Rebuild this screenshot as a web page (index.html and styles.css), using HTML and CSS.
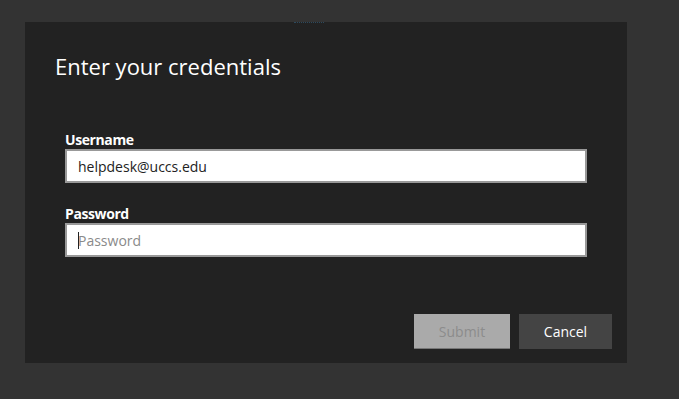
FILE: index.html
```html
<!DOCTYPE html>
<html lang="en">
<head>
  <meta charset="UTF-8">
  <title>Enter your credentials</title>
  <link rel="stylesheet" href="styles.css">
</head>
<body>
  <div class="dialog">
    <div class="dots"></div>
    <h2>Enter your credentials</h2>
    <form class="cred-form">
      <!-- Username -->
      <div class="form-group">
        <label for="username">Username</label>
        <input type="text" id="username" value="helpdesk@uccs.edu">
      </div>

      <!-- Password -->
      <div class="form-group">
        <label for="password">Password</label>
        <div class="field">
          <span class="caret"></span>
          <input type="password" id="password" placeholder="Password">
        </div>
      </div>
    </form>

    <!-- Buttons -->
    <div class="actions">
      <button type="button" class="btn btn-submit" disabled>Submit</button>
      <button type="button" class="btn btn-cancel">Cancel</button>
    </div>
  </div>
</body>
</html>
```

FILE: styles.css
```css
body {
  margin: 0;
  background: #333333;
  font-family: 'Open Sans', 'Noto Sans', sans-serif;
  color: #fff;
  height: 399px;
  overflow: hidden;
}

/* Dialog */
.dialog {
  position: relative;
  box-sizing: border-box;
  margin: 22px 0 0 25px;
  width: 602px;
  height: 341px;
  background: #222222;
  padding: 28px 40px 14px 30px;
  display: flex;
  flex-direction: column;
}

.dots {
  position: absolute;
  top: 0;
  left: 269px;
  width: 30px;
  height: 1px;
  border-top: 1px dotted #2d4a5e;
}

.dialog h2 {
  margin: 0;
  font-size: 22px;
  font-weight: 400;
  line-height: 32px;
  color: #fff;
}

.cred-form {
  margin-top: 49px;
  padding-left: 10px;
}

.form-group {
  margin-bottom: 22px;
}

.form-group label {
  display: block;
  font-size: 14px;
  font-weight: 700;
  letter-spacing: -0.4px;
  line-height: 18px;
  color: #fff;
}

.field {
  position: relative;
}

.form-group input {
  display: block;
  box-sizing: border-box;
  width: 522px;
  height: 34px;
  margin: 0;
  padding: 0 11px;
  border: 2px solid #999;
  background: #fff;
  font-family: 'Open Sans', 'Noto Sans', sans-serif;
  font-size: 14px;
  color: #222;
  outline: none;
}

.form-group input::placeholder {
  color: #8a8a8a;
}

.caret {
  position: absolute;
  left: 13px;
  top: 9px;
  width: 1px;
  height: 17px;
  background: #222;
}

/* Buttons */
.actions {
  margin-top: auto;
  display: flex;
  justify-content: flex-end;
  gap: 9px;
  margin-right: -25px;
}

.btn {
  height: 35px;
  border: none;
  font-family: 'Open Sans', 'Noto Sans', sans-serif;
  font-size: 14px;
  padding: 0;
}

.btn-submit {
  width: 96px;
  background: #aaaaaa;
  color: #8c8c8c;
  border-bottom: 1px solid #777;
}

.btn-cancel {
  width: 93px;
  background: #444444;
  color: #fff;
}
```
